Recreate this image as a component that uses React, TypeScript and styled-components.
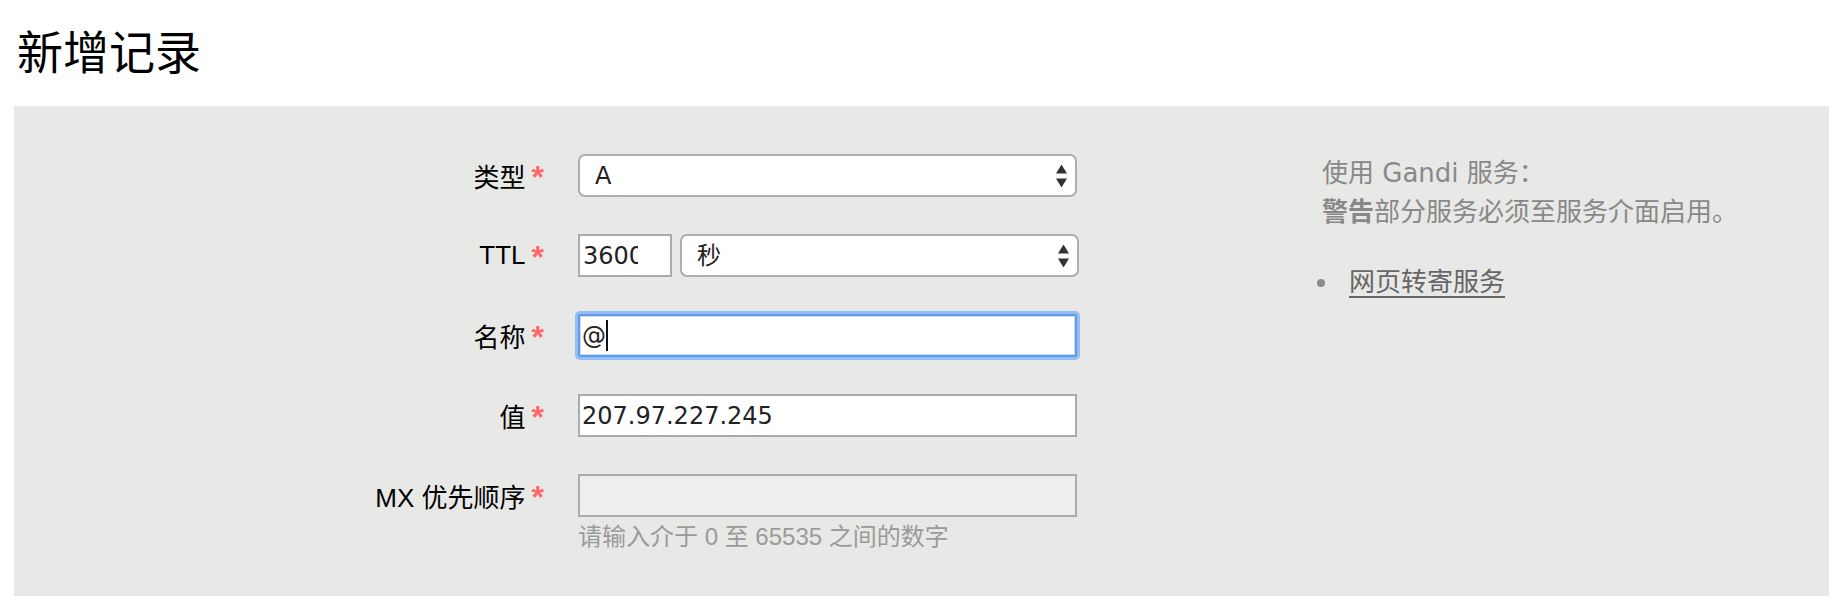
import React from 'react';
import styled, { createGlobalStyle, css } from 'styled-components';

const GlobalStyle = createGlobalStyle`
  html, body { margin: 0; padding: 0; background: #fff; }
  body { font-family: "Liberation Sans", "Noto Sans CJK SC", sans-serif; }
`;

const Page = styled.div`
  padding: 0 1px 0 14px;
  height: 596px;
  overflow: hidden;
`;

const Title = styled.h1`
  margin: 0;
  height: 106px;
  box-sizing: border-box;
  padding: 17px 0 0 3px;
  font-family: "Noto Sans CJK SC", sans-serif;
  font-weight: 400;
  font-size: 46px;
  line-height: 64px;
  color: #000;
`;

const Panel = styled.section`
  background: #e8e8e6;
  display: flex;
  align-items: flex-start;
  padding-top: 48px;
  height: 490px;
  box-sizing: border-box;
`;

const Form = styled.div`
  display: flex;
  flex-direction: column;
  gap: 37px;
`;

const Row = styled.div`
  display: grid;
  grid-template-columns: 530px 499px;
  column-gap: 34px;
  align-items: start;
`;

const Label = styled.label`
  height: 43px;
  display: flex;
  align-items: center;
  justify-content: flex-end;
  font-size: 26px;
  color: #000;
  white-space: nowrap;
`;

const Required = styled.span`
  display: inline-block;
  color: #fb6a6a;
  font-size: 32px;
  line-height: 1;
  font-weight: 700;
  margin-left: 6px;
  position: relative;
  top: 1px;
`;

const Field = styled.div`
  display: flex;
  flex-direction: column;
`;

const Pair = styled.div`
  display: flex;
  gap: 8px;
`;

const SelectWrap = styled.div<{ $grow?: boolean }>`
  position: relative;
  flex: ${p => (p.$grow ? '1 1 auto' : 'none')};
  width: ${p => (p.$grow ? 'auto' : '100%')};
  margin-right: ${p => (p.$grow ? '-2px' : '0')};
`;

const Select = styled.select`
  appearance: none;
  -webkit-appearance: none;
  width: 100%;
  height: 43px;
  box-sizing: border-box;
  border: 2px solid #aaaeb5;
  border-radius: 7px;
  background: #fff;
  padding: 0 40px 0 15px;
  font-family: "DejaVu Sans", "Noto Sans CJK SC", sans-serif;
  font-size: 24px;
  color: #222;
  outline: none;
`;

const Arrows = styled.svg`
  position: absolute;
  right: 10px;
  top: 50%;
  transform: translateY(-50%);
  width: 11px;
  height: 23px;
  pointer-events: none;
`;

const InputWrap = styled.div`
  position: relative;
`;

const TextInput = styled.input<{ $focused?: boolean; $narrow?: boolean }>`
  display: block;
  width: ${p => (p.$narrow ? '94px' : '100%')};
  height: 43px;
  box-sizing: border-box;
  border: 2px solid #a8acb2;
  border-radius: 0;
  background: #fff;
  padding: ${p => (p.$narrow ? '0 32px 0 3px' : '0 2px')};
  font-family: "DejaVu Sans", "Noto Sans CJK SC", sans-serif;
  font-size: 24px;
  color: #222;
  outline: none;
  &:disabled {
    background: #eeeeed;
  }
  ${p =>
    p.$focused &&
    css`
      border-color: #5e9bea;
      border-radius: 2px;
      box-shadow: 0 0 0 3px #93bdf3, inset 0 0 0 1px #c9ddf8;
    `}
`;

const Caret = styled.span`
  position: absolute;
  left: 28px;
  top: 6px;
  width: 2px;
  height: 31px;
  background: #111;
`;

const Hint = styled.div`
  margin-top: 5px;
  font-size: 24px;
  line-height: 30px;
  color: #9a9a9a;
`;

const Aside = styled.aside`
  margin-left: 245px;
  font-family: "DejaVu Sans", "Noto Sans CJK SC", sans-serif;
  font-size: 26px;
  line-height: 39px;
  color: #888;
`;

const Note = styled.p`
  margin: 0;
  strong { font-weight: 700; }
`;

const Services = styled.ul`
  margin: 31px 0 0;
  padding: 0;
  list-style: none;
`;

const Service = styled.li`
  display: flex;
  align-items: center;
  &::before {
    content: '';
    width: 8px;
    height: 8px;
    border-radius: 50%;
    background: #8c8c8c;
    margin: 0 24px 0 -5px;
  }
`;

const ServiceLink = styled.a`
  color: #666;
  text-decoration: underline;
  text-decoration-thickness: 2px;
  text-underline-offset: 5px;
`;

const UpDown = () => (
  <Arrows viewBox="0 0 11 23">
    <path d="M5.5 0 L11 9 H0 Z" fill="#333" />
    <path d="M0 14 H11 L5.5 23 Z" fill="#333" />
  </Arrows>
);

const Req = () => <Required>*</Required>;

export default function App() {
  return (
    <>
      <GlobalStyle />
      <Page>
        <Title>新增记录</Title>
        <Panel>
          <Form>
            <Row>
              <Label>类型<Req /></Label>
              <SelectWrap>
                <Select defaultValue="A">
                  <option value="A">A</option>
                  <option value="AAAA">AAAA</option>
                  <option value="CNAME">CNAME</option>
                  <option value="MX">MX</option>
                </Select>
                <UpDown />
              </SelectWrap>
            </Row>
            <Row>
              <Label>TTL<Req /></Label>
              <Pair>
                <TextInput $narrow defaultValue="3600" />
                <SelectWrap $grow>
                  <Select defaultValue="s">
                    <option value="s">秒</option>
                    <option value="m">分</option>
                    <option value="h">时</option>
                  </Select>
                  <UpDown />
                </SelectWrap>
              </Pair>
            </Row>
            <Row>
              <Label>名称<Req /></Label>
              <InputWrap>
                <TextInput $focused defaultValue="@" />
                <Caret />
              </InputWrap>
            </Row>
            <Row>
              <Label>值<Req /></Label>
              <TextInput defaultValue="207.97.227.245" />
            </Row>
            <Row>
              <Label>MX 优先顺序<Req /></Label>
              <Field>
                <TextInput disabled defaultValue="" />
                <Hint>请输入介于 0 至 65535 之间的数字</Hint>
              </Field>
            </Row>
          </Form>
          <Aside>
            <Note>
              使用 Gandi 服务：
              <br />
              <strong>警告</strong>部分服务必须至服务介面启用。
            </Note>
            <Services>
              <Service>
                <ServiceLink href="#">网页转寄服务</ServiceLink>
              </Service>
            </Services>
          </Aside>
        </Panel>
      </Page>
    </>
  );
}
